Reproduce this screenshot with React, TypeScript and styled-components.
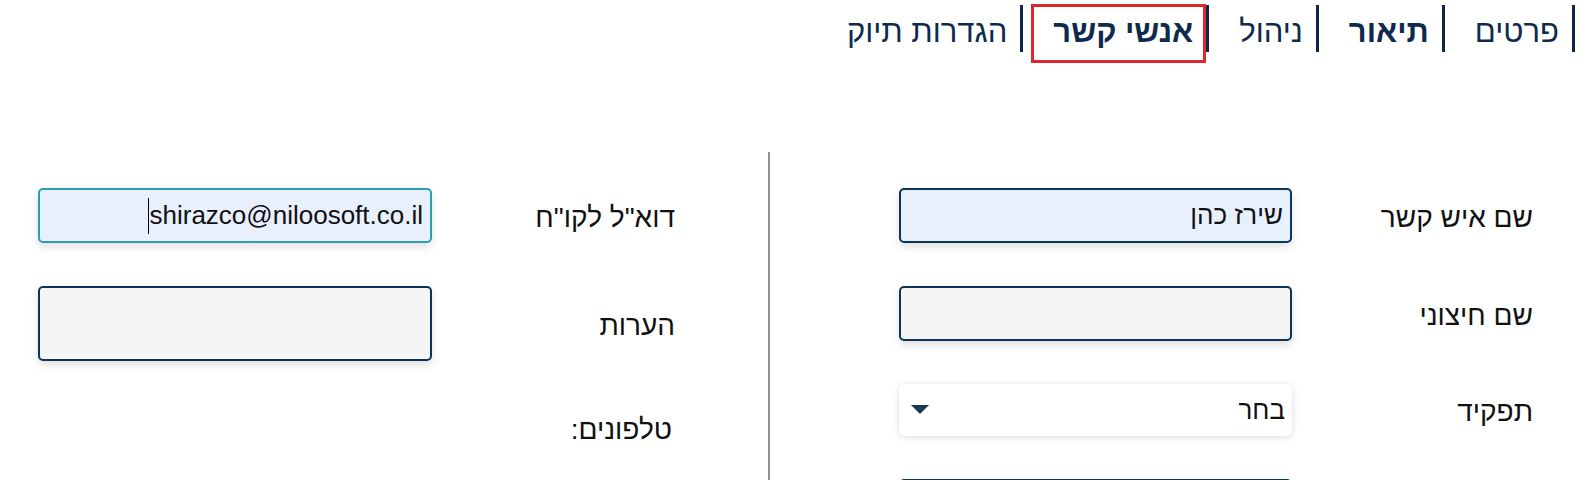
import React from "react";
import styled, { createGlobalStyle, css } from "styled-components";

const GlobalStyle = createGlobalStyle`
  html, body {
    margin: 0;
    padding: 0;
    overflow: hidden;
    background: #ffffff;
  }
  body {
    font-family: "Liberation Sans", "DejaVu Sans", sans-serif;
  }
`;

const Page = styled.div`
  direction: rtl;
  width: 1593px;
  height: 480px;
  overflow: hidden;
  font-family: "Liberation Sans", "DejaVu Sans", sans-serif;
  color: #111;
`;

const TabBar = styled.ul`
  display: flex;
  list-style: none;
  margin: 0;
  padding: 5px 18px 0 0;
  height: 65px;
  box-sizing: border-box;
`;

const TabItem = styled.li`
  display: flex;
  align-items: flex-start;
  height: 47px;
  border-right: 3px solid #0d2746;
  margin-left: 8px;
`;

const TabLabel = styled.span<{ $bold?: boolean; $active?: boolean }>`
  box-sizing: border-box;
  height: 59px;
  margin-top: -1px;
  padding: 0 10px 0 19px;
  border: 3px solid ${(p) => (p.$active ? "#e3262b" : "transparent")};
  font-size: 31px;
  line-height: 50px;
  white-space: nowrap;
  color: #0e2a4c;
  font-weight: ${(p) => (p.$bold ? 700 : 400)};
`;

const Form = styled.div`
  display: flex;
  margin-top: 87px;
  height: 328px;
  overflow: hidden;
`;

const Column = styled.div<{ $width: string; $padRight: number }>`
  box-sizing: border-box;
  width: ${(p) => p.$width};
  padding: 36px ${(p) => p.$padRight}px 0 0;
`;

const Divider = styled.div`
  width: 2px;
  background: #8f8f8f;
  flex: none;
`;

const FieldGrid = styled.div<{ $label: number; $input: number }>`
  display: grid;
  grid-template-columns: ${(p) => p.$label}px ${(p) => p.$input}px;
  row-gap: 43px;
  align-items: center;
`;

const Label = styled.div<{ $indent?: number; $rowHeight?: number }>`
  font-size: 28px;
  line-height: 32px;
  padding-top: 4px;
  padding-right: ${(p) => p.$indent ?? 0}px;
  color: #111;
  white-space: nowrap;
  ${(p) =>
    p.$rowHeight &&
    css`
      min-height: ${p.$rowHeight}px;
      display: flex;
      align-items: center;
      box-sizing: border-box;
    `}
`;

const fieldBase = css`
  box-sizing: border-box;
  width: 100%;
  border-radius: 5px;
  font-family: "Liberation Sans", "DejaVu Sans", sans-serif;
  font-size: 26px;
  color: #111;
  box-shadow: 0 4px 8px rgba(0, 0, 0, 0.13);
`;

const TextInput = styled.input<{ $bg?: string }>`
  ${fieldBase};
  height: 55px;
  border: 2px solid #0a3559;
  background: ${(p) => p.$bg ?? "#f5f5f5"};
  padding: 0 7px;
  direction: rtl;
  outline: none;
`;

const NotesArea = styled.textarea`
  ${fieldBase};
  display: block;
  height: 75px;
  border: 2px solid #0a3559;
  background: #f5f5f5;
  resize: none;
  padding: 8px 7px;
  outline: none;
`;

const FocusedField = styled.div`
  ${fieldBase};
  height: 55px;
  border: 2px solid #2a9db1;
  background: #e8f0fe;
  padding: 0 7px;
  display: flex;
  align-items: center;
  justify-content: flex-end;
  direction: ltr;
`;

const Caret = styled.span`
  width: 1px;
  height: 36px;
  background: #000;
  flex: none;
`;

const FieldText = styled.span`
  white-space: nowrap;
`;

const SelectBox = styled.div`
  ${fieldBase};
  height: 52px;
  background: #ffffff;
  border-radius: 6px;
  box-shadow: 0 1px 7px rgba(0, 0, 0, 0.14);
  display: flex;
  align-items: center;
  justify-content: space-between;
  padding: 0 7px 0 12px;
`;

const Arrow = styled.svg`
  width: 18px;
  height: 9px;
  flex: none;
  margin-top: -2px;
`;

const BottomInput = styled(TextInput)`
  align-self: start;
`;

const tabs = [
  { label: "פרטים" },
  { label: "תיאור", bold: true },
  { label: "ניהול" },
  { label: "אנשי קשר", bold: true, active: true },
  { label: "הגדרות תיוק" },
];

export default function App() {
  return (
    <>
      <GlobalStyle />
      <Page>
        <TabBar>
          {tabs.map((t) => (
            <TabItem key={t.label}>
              <TabLabel $bold={t.bold} $active={t.active}>
                {t.label}
              </TabLabel>
            </TabItem>
          ))}
        </TabBar>
        <Form>
          <Column $width="823px" $padRight={60}>
            <FieldGrid $label={241} $input={393}>
              <Label>שם איש קשר</Label>
              <TextInput readOnly value="שירז כהן" $bg="#e8f0fe" />
              <Label>שם חיצוני</Label>
              <TextInput readOnly value="" />
              <Label>תפקיד</Label>
              <SelectBox>
                <FieldText>בחר</FieldText>
                <Arrow viewBox="0 0 18 9">
                  <path d="M0 0 H18 L9 9 Z" fill="#1d3758" />
                </Arrow>
              </SelectBox>
              <Label />
              <BottomInput readOnly value="" />
            </FieldGrid>
          </Column>
          <Divider />
          <Column $width="768px" $padRight={93}>
            <FieldGrid $label={243} $input={394}>
              <Label>דוא"ל לקו"ח</Label>
              <FocusedField>
                <Caret />
                <FieldText>shirazco@niloosoft.co.il</FieldText>
              </FocusedField>
              <Label>הערות</Label>
              <NotesArea readOnly value="" />
              <Label $indent={3} $rowHeight={48}>
                טלפונים:
              </Label>
            </FieldGrid>
          </Column>
        </Form>
      </Page>
    </>
  );
}
